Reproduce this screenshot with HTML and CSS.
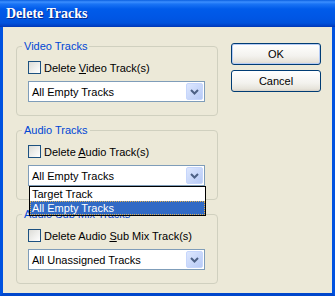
FILE: index.html
```html
<!DOCTYPE html>
<html lang="en">
<head>
  <meta charset="UTF-8">
  <title>Delete Tracks</title>
  <link rel="stylesheet" href="styles.css">
</head>
<body>
  <div class="window">
    <div class="titlebar"><span class="title">Delete Tracks</span></div>
    <div class="client">
      <div class="groups">
        <fieldset class="group">
          <legend>Video Tracks</legend>
          <label class="check"><span class="box"></span><span>Delete <u>V</u>ideo Track(s)</span></label>
          <div class="combo">
            <span class="value">All Empty Tracks</span>
            <span class="arrow"><svg width="15" height="17" viewBox="0 0 15 17"><path d="M4 7 L7.5 10.5 L11 7" fill="none" stroke="#4D6185" stroke-width="2"/></svg></span>
          </div>
        </fieldset>

        <fieldset class="group">
          <legend>Audio Tracks</legend>
          <label class="check"><span class="box"></span><span>Delete <u>A</u>udio Track(s)</span></label>
          <div class="combo">
            <span class="value">All Empty Tracks</span>
            <span class="arrow"><svg width="15" height="17" viewBox="0 0 15 17"><path d="M4 7 L7.5 10.5 L11 7" fill="none" stroke="#4D6185" stroke-width="2"/></svg></span>
            <!-- open dropdown list -->
            <ul class="droplist">
              <li>Target Track</li>
              <li class="selected">All Empty Tracks</li>
            </ul>
          </div>
        </fieldset>

        <fieldset class="group">
          <legend>Audio Sub Mix Tracks</legend>
          <label class="check"><span class="box"></span><span>Delete Audio <u>S</u>ub Mix Track(s)</span></label>
          <div class="combo">
            <span class="value">All Unassigned Tracks</span>
            <span class="arrow"><svg width="15" height="17" viewBox="0 0 15 17"><path d="M4 7 L7.5 10.5 L11 7" fill="none" stroke="#4D6185" stroke-width="2"/></svg></span>
          </div>
        </fieldset>
      </div>

      <div class="buttons">
        <button class="btn default">OK</button>
        <button class="btn">Cancel</button>
      </div>
    </div>
  </div>
</body>
</html>
```

FILE: styles.css
```css
/* General styling */
body {
  margin: 0;
  font-family: 'Liberation Sans', Tahoma, sans-serif;
  font-size: 11px;
  color: #000;
}

.window {
  width: 335px;
  height: 296px;
  display: flex;
  flex-direction: column;
  background: #ECE9D8;
}

/* Title bar */
.titlebar {
  height: 27px;
  flex-shrink: 0;
  display: flex;
  align-items: center;
  padding-left: 6px;
  background: linear-gradient(to bottom, #0A5FE0 0px, #3C8FFF 2px, #1A74F5 4px, #005BEA 9px, #0056E4 18px, #0052DC 23px, #003FC4 26px, #0036B0 27px);
}

.title {
  font-family: 'Liberation Serif', serif;
  font-weight: bold;
  font-size: 14px;
  color: #fff;
  text-shadow: 1px 1px 0 #0A2A8C;
}

/* Client area */
.client {
  flex: 1;
  display: flex;
  gap: 13px;
  padding: 12px 11px 0 13px;
  border-left: 3px solid #0052E0;
  border-right: 3px solid #0052E0;
  border-bottom: 3px solid #0047CC;
}

.groups {
  width: 202px;
  display: flex;
  flex-direction: column;
  gap: 7px;
}

.group {
  margin: 0;
  padding: 8px 12px 13px 11px;
  border: 1px solid #D0D0BF;
  border-radius: 4px;
  display: flex;
  flex-direction: column;
  gap: 7px;
}

.group legend {
  margin-left: -6px;
  padding: 0 2px;
  line-height: 14px;
  color: #0046D5;
}

.check {
  display: flex;
  align-items: center;
  gap: 3px;
  height: 13px;
}

.box {
  width: 13px;
  height: 13px;
  box-sizing: border-box;
  border: 1px solid #1C5180;
  background: linear-gradient(135deg, #DCDCD7, #FFFFFF);
}

/* Combo box */
.combo {
  position: relative;
  height: 21px;
  box-sizing: border-box;
  border: 1px solid #7F9DB9;
  background: #fff;
  display: flex;
}

.combo .value {
  flex: 1;
  display: flex;
  align-items: center;
  padding-left: 3px;
}

.combo .arrow {
  width: 15px;
  margin: 1px;
  display: flex;
  align-items: center;
  justify-content: center;
  border: 1px solid #C6D6FC;
  border-radius: 2px;
  background: linear-gradient(135deg, #DDE7FE, #B7CAF6);
}

.droplist {
  position: absolute;
  top: 100%;
  left: 0;
  right: -2px;
  margin: 1px 0 0;
  padding: 0;
  list-style: none;
  background: #fff;
  border: 1px solid #000;
  z-index: 5;
}

.droplist li {
  height: 14px;
  line-height: 14px;
  padding-left: 2px;
}

.droplist li.selected {
  background: #316AC5;
  color: #fff;
  outline: 1px dotted #E0B050;
  outline-offset: -1px;
}

/* Buttons */
.buttons {
  width: 90px;
  display: flex;
  flex-direction: column;
  gap: 5px;
  padding-top: 4px;
}

.btn {
  height: 22px;
  padding: 0;
  font-family: inherit;
  font-size: 11px;
  color: #000;
  border: 1px solid #003C74;
  border-radius: 3px;
  background: linear-gradient(to bottom, #FFFFFF, #F3F2EE 60%, #E6E3DA 90%, #D6D0C5);
}

.btn.default {
  box-shadow: inset 0 0 0 1px #B6CCF5;
}
```
